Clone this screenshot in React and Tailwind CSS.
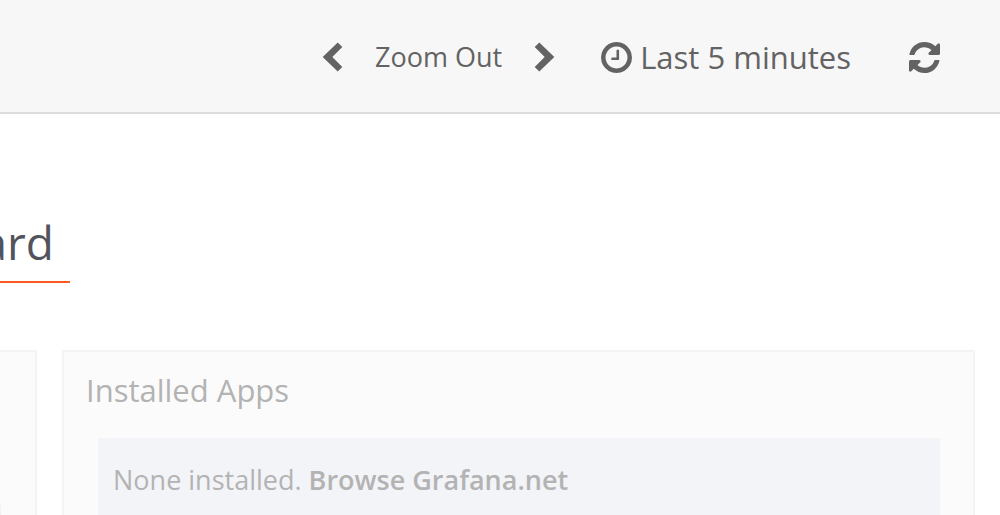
function Chevron({ flip }) {
  return (
    <svg viewBox="0 0 20 30" className={flip ? "h-[30px] w-[21px] rotate-180" : "h-[30px] w-[21px]"} fill="currentColor" aria-hidden="true">
      <path d="M15.2.4 19.8 5 9.8 15l10 10-4.6 4.6L.2 15z" />
    </svg>
  );
}

function Clock() {
  return (
    <svg viewBox="128 128 1536 1536" className="size-[31px] shrink-0" fill="currentColor" aria-hidden="true">
      <path d="M1024 544v448q0 14-9 23t-23 9h-320q-14 0-23-9t-9-23v-64q0-14 9-23t23-9h224v-352q0-14 9-23t23-9h64q14 0 23 9t9 23zm416 352q0-148-73-273t-198-198-273-73-273 73-198 198-73 273 73 273 198 198 273 73 273-73 198-198 73-273zm224 0q0 209-103 385.5t-279.5 279.5-385.5 103-385.5-103-279.5-279.5-103-385.5 103-385.5 279.5-279.5 385.5-103 385.5 103 279.5 279.5 103 385.5z" />
    </svg>
  );
}

function Refresh() {
  return (
    <svg viewBox="128 128 1536 1536" className="size-[31px]" fill="currentColor" aria-hidden="true">
      <path d="M1639 1056q0 5-1 7-64 268-268 434.5t-478 166.5q-146 0-282.5-55t-243.5-157l-129 129q-19 19-45 19t-45-19-19-45v-448q0-26 19-45t45-19h448q26 0 45 19t19 45-19 45l-137 137q71 66 161 102t187 36q134 0 250-65t186-179q11-17 53-117 8-23 30-23h192q13 0 22.5 9.5t9.5 22.5zm25-800v448q0 26-19 45t-45 19h-448q-26 0-45-19t-19-45 19-45l138-138q-148-137-349-137-134 0-250 65t-186 179q-11 17-53 117-8 23-30 23h-199q-13 0-22.5-9.5t-9.5-22.5v-7q65-268 270-434.5t480-166.5q146 0 284 55.5t245 156.5l130-129q19-19 45-19t45 19 19 45z" />
    </svg>
  );
}

export default function App() {
  return (
    <div className="flex h-screen flex-col overflow-hidden bg-white font-['Open_Sans','Noto_Sans',sans-serif]">
      <header className="flex shrink-0 items-center justify-end border-b-2 border-[#dddddd] bg-[#f7f7f7] pt-[41px] pr-[60px] pb-[39px] text-[#636363]">
        <button type="button" aria-label="Shift time range back"><Chevron /></button>
        <button type="button" className="mx-8 text-[27px] leading-8">Zoom Out</button>
        <button type="button" aria-label="Shift time range forward"><Chevron flip /></button>
        <button type="button" className="ml-[46px] flex items-center gap-2 text-[31px] leading-8">
          <Clock />
          <span>Last 5 minutes</span>
        </button>
        <button type="button" aria-label="Refresh dashboard" className="ml-[58px]"><Refresh /></button>
      </header>

      <main className="flex min-h-0 grow flex-col pt-[97px]">
        <h1 className="flex w-[70px] shrink-0 justify-end overflow-hidden border-b-2 border-[#ff5a1f] pr-4 pb-2 text-[46px] leading-[62px] text-[#52545c]">ard</h1>
        <div className="mt-[67px] flex min-h-0 grow gap-[25px] pr-[25px]">
          <section className="flex w-[37px] shrink-0 items-end border-t-2 border-r-2 border-[#f4f4f6] bg-[#fbfbfb]">
            <div className="h-[10px] w-px bg-[#eff1f6]" />
          </section>
          <section className="grow border-2 border-b-0 border-[#f4f4f6] bg-[#fbfbfb] pr-[33px] pl-[22px] text-[#b3b3b3]">
            <h2 className="pt-4 text-[31px] leading-[44px]">Installed Apps</h2>
            <p className="mt-[26px] ml-3 h-32 bg-[#f3f4f8] px-[15px] pt-5 text-[27px] leading-[44px]">
              None installed. <a href="#browse" className="font-semibold">Browse Grafana.net</a>
            </p>
          </section>
        </div>
      </main>
    </div>
  );
}
